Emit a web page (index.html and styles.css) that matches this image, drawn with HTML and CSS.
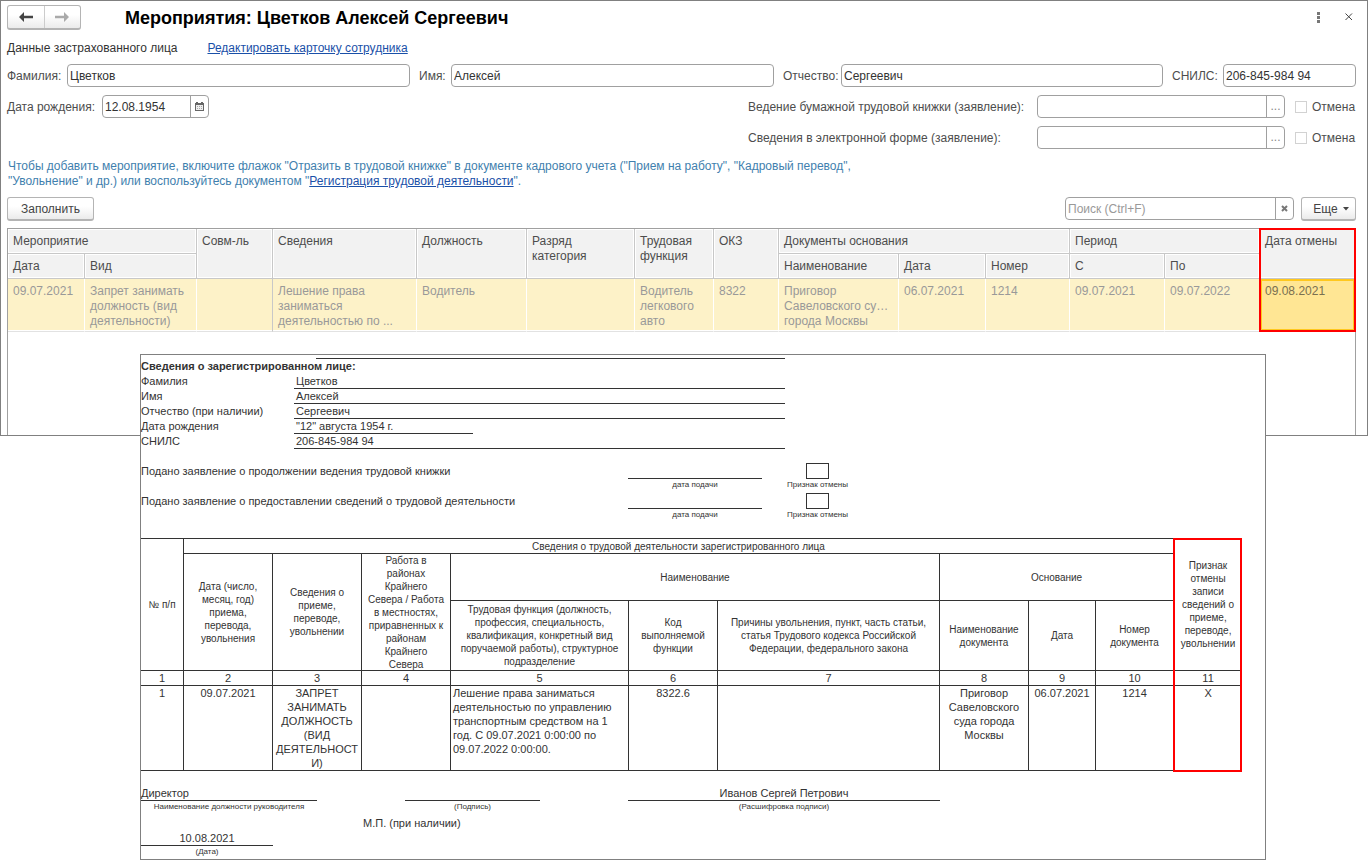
FILE: index.html
```html
<!DOCTYPE html>
<html lang="ru">
<head>
<meta charset="utf-8">
<title>Мероприятия: Цветков Алексей Сергеевич</title>
<link rel="stylesheet" href="styles.css">
</head>
<body>
<main class="window">
  <header class="titlebar">
    <div class="nav">
      <button class="nav-btn" type="button" aria-label="Назад"><svg class="nav-icon" viewBox="0 0 16 12"><path d="M1 6 L6 1 V4.8 H15 V7.2 H6 V11 Z"/></svg></button>
      <button class="nav-btn nav-btn-off" type="button" aria-label="Вперед"><svg class="nav-icon" viewBox="0 0 16 12"><path d="M15 6 L10 1 V4.8 H1 V7.2 H10 V11 Z"/></svg></button>
    </div>
    <h1 class="title">Мероприятия: Цветков Алексей Сергеевич</h1>
    <button class="tool" type="button" aria-label="Меню"><svg class="tool-icon" viewBox="0 0 12 12"><path class="dots" d="M4 0h3v3H4zM4 4h3v3H4zM4 8h3v3H4z"/></svg></button>
    <button class="tool" type="button" aria-label="Закрыть"><svg class="tool-icon" viewBox="0 0 12 12"><path class="cross" d="M2.5 1.5 L9 8 M9 1.5 L2.5 8"/></svg></button>
  </header>

  <div class="intro">
    <span>Данные застрахованного лица</span>
    <a class="link" href="#card">Редактировать карточку сотрудника</a>
  </div>

  <div class="person">
    <label class="label" for="surname">Фамилия:</label><input class="field" id="surname" value="Цветков">
    <label class="label label-next" for="name">Имя:</label><input class="field" id="name" value="Алексей">
    <label class="label label-next" for="patronymic">Отчество:</label><input class="field" id="patronymic" value="Сергеевич">
    <label class="label label-next" for="snils">СНИЛС:</label><input class="field" id="snils" value="206-845-984 94">
  </div>

  <div class="details">
    <div class="birth">
      <label class="label" for="birth">Дата рождения:</label>
      <div class="combo combo-date">
        <input class="combo-input" id="birth" value="12.08.1954">
        <button class="combo-btn" type="button" aria-label="Календарь"><svg class="cal" viewBox="0 0 9 9"><path d="M0 1h1V0h2v1h3V0h2v1h1v8H0z" fill="#666"/><path d="M1 3h7v5H1z" fill="#eee"/><path d="M2 4h1v1H2zM4 4h1v1H4zM6 4h1v1H6zM2 6h1v1H2zM4 6h1v1H4zM6 6h1v1H6z" fill="#aaa"/></svg></button>
      </div>
    </div>
    <div class="claims">
      <label class="label" for="paper">Ведение бумажной трудовой книжки (заявление):</label>
      <div class="combo"><input class="combo-input" id="paper"><button class="combo-btn" type="button">...</button></div>
      <label class="check"><input class="check-box" type="checkbox">Отмена</label>
      <label class="label" for="digital">Сведения в электронной форме (заявление):</label>
      <div class="combo"><input class="combo-input" id="digital"><button class="combo-btn" type="button">...</button></div>
      <label class="check"><input class="check-box" type="checkbox">Отмена</label>
    </div>
  </div>

  <p class="hint">Чтобы добавить мероприятие, включите флажок "Отразить в трудовой книжке" в документе кадрового учета ("Прием на работу", "Кадровый перевод",<br>"Увольнение" и др.) или воспользуйтесь документом "<a class="link" href="#reg">Регистрация трудовой деятельности</a>".</p>

  <div class="commands">
    <button class="btn btn-fill" type="button">Заполнить</button>
    <div class="combo combo-search">
      <input class="combo-input" aria-label="Поиск" placeholder="Поиск (Ctrl+F)">
      <button class="combo-btn" type="button" aria-label="Очистить"><svg class="clear" viewBox="0 0 7 7"><path d="M1 1 L6 6 M6 1 L1 6"/></svg></button>
    </div>
    <button class="btn btn-more" type="button">Еще<svg class="caret" viewBox="0 0 6 4"><path d="M0 0h6L3 3.6z"/></svg></button>
  </div>

  <div class="list">
    <table class="events">
      <colgroup><col class="e77"><col class="e112"><col class="e76"><col class="e144"><col class="e110"><col class="e108"><col class="e79"><col class="e65"><col class="e120"><col class="e87"><col class="e84"><col class="e95"><col class="e95"><col class="e95"></colgroup>
      <thead>
        <tr><th colspan="2">Мероприятие</th><th rowspan="2">Совм-ль</th><th rowspan="2">Сведения</th><th rowspan="2">Должность</th><th rowspan="2">Разряд<br>категория</th><th rowspan="2">Трудовая<br>функция</th><th rowspan="2">ОКЗ</th><th colspan="3">Документы основания</th><th colspan="2">Период</th><th rowspan="2" class="mark-top">Дата отмены</th></tr>
        <tr><th>Дата</th><th>Вид</th><th>Наименование</th><th>Дата</th><th>Номер</th><th>С</th><th>По</th></tr>
      </thead>
      <tbody>
        <tr><td>09.07.2021</td><td>Запрет занимать<br>должность (вид<br>деятельности)</td><td class="fixed-edge"></td><td>Лешение права<br>заниматься<br>деятельностью по ...</td><td>Водитель</td><td></td><td>Водитель<br>легкового<br>авто</td><td>8322</td><td>Приговор<br>Савеловского су…<br>города Москвы</td><td>06.07.2021</td><td>1214</td><td>09.07.2021</td><td>09.07.2022</td><td class="current">09.08.2021</td></tr>
      </tbody>
    </table>
  </div>
</main>

<article class="sheet">
  <div class="top-rule"></div>
  <h2 class="sheet-title">Сведения о зарегистрированном лице:</h2>
  <dl class="facts">
    <dt>Фамилия</dt><dd>Цветков</dd>
    <dt>Имя</dt><dd>Алексей</dd>
    <dt>Отчество (при наличии)</dt><dd>Сергеевич</dd>
    <dt>Дата рождения</dt><dd class="short">"12" августа 1954 г.</dd>
    <dt>СНИЛС</dt><dd>206-845-984 94</dd>
  </dl>

  <div class="request">
    <span>Подано заявление о продолжении ведения трудовой книжки</span>
    <span class="blank"></span><span class="square"></span>
    <small class="note note-date">дата подачи</small><small class="note note-mark">Признак отмены</small>
  </div>
  <div class="request">
    <span>Подано заявление о предоставлении сведений о трудовой деятельности</span>
    <span class="blank"></span><span class="square"></span>
    <small class="note note-date">дата подачи</small><small class="note note-mark">Признак отмены</small>
  </div>

  <table class="record">
    <colgroup><col class="r43"><col class="r89"><col class="r89"><col class="r89"><col class="r178"><col class="r89"><col class="r222"><col class="r89"><col class="r67"><col class="r78"><col class="r68"></colgroup>
    <thead>
      <tr class="h-title"><th rowspan="3">№ п/п</th><th colspan="9">Сведения о трудовой деятельности зарегистрированного лица</th><th rowspan="3" class="flag flag-top">Признак<br>отмены<br>записи<br>сведений о<br>приеме,<br>переводе,<br>увольнении</th></tr>
      <tr class="h-group"><th rowspan="2">Дата (число,<br>месяц, год)<br>приема,<br>перевода,<br>увольнения</th><th rowspan="2">Сведения о<br>приеме,<br>переводе,<br>увольнении</th><th rowspan="2"><div class="tight">Работа в<br>районах<br>Крайнего<br>Севера / Работа<br>в местностях,<br>приравненных к<br>районам<br>Крайнего<br>Севера</div></th><th colspan="3">Наименование</th><th colspan="3">Основание</th></tr>
      <tr class="h-cols"><th>Трудовая функция (должность,<br>профессия, специальность,<br>квалификация, конкретный вид<br>поручаемой работы), структурное<br>подразделение</th><th>Код<br>выполняемой<br>функции</th><th>Причины увольнения, пункт, часть статьи,<br>статья Трудового кодекса Российской<br>Федерации, федерального закона</th><th>Наименование<br>документа</th><th>Дата</th><th>Номер<br>документа</th></tr>
    </thead>
    <tbody>
      <tr class="nums"><td>1</td><td>2</td><td>3</td><td>4</td><td>5</td><td>6</td><td>7</td><td>8</td><td>9</td><td>10</td><td class="flag">11</td></tr>
      <tr class="entry"><td>1</td><td>09.07.2021</td><td>ЗАПРЕТ<br>ЗАНИМАТЬ<br>ДОЛЖНОСТЬ<br>(ВИД<br>ДЕЯТЕЛЬНОСТ<br>И)</td><td></td><td class="left">Лешение права заниматься<br>деятельностью по управлению<br>транспортным средством на 1<br>год. С 09.07.2021 0:00:00 по<br>09.07.2022 0:00:00.</td><td>8322.6</td><td></td><td>Приговор<br>Савеловского<br>суда города<br>Москвы</td><td>06.07.2021</td><td>1214</td><td class="flag flag-end">X</td></tr>
    </tbody>
  </table>

  <div class="sign">
    <div><div class="line line-left">Директор</div><small class="note">Наименование должности руководителя</small></div>
    <div><div class="line"></div><small class="note">(Подпись)</small></div>
    <div><div class="line">Иванов Сергей Петрович</div><small class="note">(Расшифровка подписи)</small></div>
  </div>
  <div class="stamp">М.П. (при наличии)</div>
  <div class="date"><div class="line">10.08.2021</div><small class="note">(Дата)</small></div>
</article>
</body>
</html>
```

FILE: styles.css
```css
* { box-sizing: border-box; }

body {
  margin: 0;
  background: #fff;
  color: #333;
  font: 12px/15px "Liberation Sans", Arial, sans-serif;
}

button, input { font: inherit; color: inherit; margin: 0; }

.window {
  border: 1px solid #808080;
  padding: 4px 11px 0 6px;
}

/* Title bar */
.titlebar { display: flex; align-items: center; height: 25px; }
.nav {
  display: flex;
  width: 74px;
  height: 25px;
  border: 1px solid #b4b4b4;
  border-bottom: 2px solid #b4b4b4;
  border-radius: 3px;
  background: linear-gradient(#fff 40%, #ebebeb);
}
.nav-btn {
  flex: 1;
  display: flex;
  align-items: center;
  justify-content: center;
  padding: 0;
  border: 0;
  background: none;
  fill: #444;
}
.nav-btn-off { border-left: 1px solid #ccc; fill: #aaa; }
.nav-icon { width: 16px; height: 12px; }
.title {
  flex: 1;
  margin: 0 0 0 44px;
  color: #000;
  font-size: 18px;
  line-height: 22px;
  font-weight: bold;
}
.tool { padding: 0; border: 0; background: none; width: 12px; height: 12px; margin-left: 18px; }
.tool:last-child { margin-right: 1px; }
.tool-icon { display: block; width: 12px; height: 12px; }
.dots { fill: #777; }
.cross { stroke: #444; fill: none; }

/* Form rows */
.intro { display: flex; gap: 30px; margin-top: 11px; }
.link { color: #1a50a8; text-decoration: underline; }
.label { padding-top: 1px; color: #4d4d4d; white-space: nowrap; }
.label-next { padding-left: 9px; }
.person {
  display: grid;
  grid-template-columns: 60px 343fr 41px 323fr 67px 322fr 60px 133px;
  align-items: center;
  margin-top: 8px;
}
.field {
  width: 100%;
  height: 23px;
  padding: 0 2px;
  border: 1px solid #a0a0a0;
  border-radius: 4px;
  background: #fff;
}
.details { display: flex; justify-content: space-between; align-items: flex-start; margin-top: 8px; }
.birth { display: grid; grid-template-columns: 95px 107px; align-items: center; }
.claims { display: grid; grid-template-columns: 289px 248px 71px; row-gap: 8px; align-items: center; }
.combo {
  display: flex;
  height: 23px;
  border: 1px solid #a0a0a0;
  border-radius: 4px;
  background: #fff;
}
.combo-input { flex: 1; min-width: 0; padding: 1px 2px 0; border: 0; background: none; }
.combo-input::placeholder { color: #999; opacity: 1; }
.combo-btn {
  display: flex;
  align-items: center;
  justify-content: center;
  width: 18px;
  padding: 0;
  border: 0;
  border-left: 1px solid #a0a0a0;
  background: none;
  color: #888;
}
.cal { width: 9px; height: 9px; }
.clear { width: 7px; height: 7px; stroke: #777; stroke-width: 2; }
.check { display: flex; align-items: center; gap: 5px; padding: 1px 0 0 10px; color: #4d4d4d; }
.check-box {
  appearance: none;
  width: 12px;
  height: 12px;
  border: 1px solid #d2d2d2;
  background: #fff;
}
.hint { margin: 10px 0 0 1px; color: #3f7fae; }

/* Command bar */
.commands { display: flex; margin-top: 8px; height: 24px; }
.btn {
  height: 24px;
  padding: 1px 0 0;
  border: 1px solid #b4b4b4;
  border-bottom: 2px solid #b4b4b4;
  border-radius: 3px;
  background: linear-gradient(#fff 40%, #ebebeb);
  color: #444;
}
.btn-fill { width: 87px; }
.combo-search { width: 229px; margin-left: auto; }
.btn-more { display: flex; align-items: center; justify-content: center; gap: 5px; width: 55px; margin-left: 7px; padding-left: 5px; }
.caret { width: 6px; height: 4px; fill: #444; }

/* Events list */
.list {
  min-height: 207px;
  margin-top: 7px;
  border: 1px solid #a0a0a0;
  border-bottom: 0;
}
.events { width: 100%; table-layout: fixed; border-collapse: separate; border-spacing: 0; }
.events th, .events td { text-align: left; vertical-align: top; font-weight: normal; white-space: nowrap; }
.events th {
  height: 25px;
  padding: 5px 5px 4px;
  border-right: 1px solid #c8c8c8;
  border-bottom: 1px solid #c8c8c8;
  background: #f2f2f2;
  box-shadow: inset 0 0 0 1px #fff;
  color: #4d4d4d;
}
.events td {
  height: 53px;
  padding: 5px 4px 2px 5px;
  border-right: 1px solid #fff;
  border-bottom: 1px solid #e2e2e2;
  background: #fdf2c8;
  box-shadow: inset 0 -1px #fff;
  color: #999;
}
.events .fixed-edge { border-right-color: #c8c8c8; }
.events .mark-top, .events .current { position: relative; border-right: 0; }
.events .current { background: #ffe694; box-shadow: inset 0 0 0 2px #ffc81e; color: #7a7050; }
.mark-top::after, .current::after { content: ""; position: absolute; inset: -1px -1px; border: 2px solid #f00; }
.mark-top::after { border-bottom: 0; }
.current::after { inset: 0 -1px -1px; border-top: 0; }
.e65 { width: 65px; }
.e76 { width: 76px; }
.e77 { width: 77px; }
.e79 { width: 79px; }
.e84 { width: 84px; }
.e87 { width: 87px; }
.e95 { width: 95px; }
.e108 { width: 108px; }
.e110 { width: 110px; }
.e112 { width: 112px; }
.e120 { width: 120px; }
.e144 { width: 144px; }

/* Printed form laid over the window */
.sheet {
  position: relative;
  margin: -82px 102px 0 140px;
  padding: 3px 23px 2px 0;
  border: 1px solid #808080;
  background: #fff;
  font-size: 11px;
}
.top-rule { width: 469px; height: 1px; margin-left: 175px; background: #333; }
.sheet-title { margin: 0; font-size: 11px; line-height: 15px; font-weight: bold; }
.facts { display: grid; grid-template-columns: 153px 491px; grid-auto-rows: 15px; margin: 0 0 15px; line-height: 14px; }
.facts dd { margin: 0; padding-left: 2px; border-bottom: 1px solid #333; }
.facts .short { width: 179px; }
.request {
  display: grid;
  grid-template-columns: 487px 134px 44px 23px;
  grid-template-rows: 15px 15px;
  align-items: end;
}
.blank { align-self: stretch; border-bottom: 1px solid #333; }
.square { grid-column: 4; height: 16px; border: 1px solid #333; }
.note { display: block; font-size: 8px; line-height: 11px; text-align: center; white-space: nowrap; }
.note-date { grid-column: 2; align-self: start; }
.note-mark { grid-column: 4; align-self: start; justify-self: center; }

.record {
  width: 100%;
  margin-top: 14px;
  table-layout: fixed;
  border-collapse: separate;
  border-spacing: 0;
  border-top: 1px solid #333;
  text-align: center;
  line-height: 14px;
}
.record th, .record td { padding: 0; border-right: 1px solid #333; border-bottom: 1px solid #333; white-space: nowrap; }
.record th { font-size: 10px; line-height: 13px; font-weight: normal; }
.tight { height: 116px; }
.h-title { height: 15px; }
.h-group { height: 47px; }
.h-cols { height: 70px; }
.nums { height: 15px; }
.entry { height: 85px; vertical-align: top; }
.record .left { padding-left: 2px; text-align: left; }
.record .flag { position: relative; border-right: 0; }
.flag::after { content: ""; position: absolute; inset: 0 0 -1px -1px; border: solid #f00; border-width: 0 2px; }
.flag-top::after { inset: -1px 0 -1px -1px; border-top-width: 2px; }
.flag-end::after { inset: 0 0 -2px -1px; border-bottom-width: 2px; }
.r43 { width: 43px; }
.r67 { width: 67px; }
.r68 { width: 68px; }
.r78 { width: 78px; }
.r89 { width: 89px; }
.r178 { width: 178px; }
.r222 { width: 222px; }

.sign { display: grid; grid-template-columns: 176px 135px 312px; column-gap: 88px; margin-top: 15px; }
.line { height: 15px; border-bottom: 1px solid #333; line-height: 14px; text-align: center; }
.line-left { text-align: left; }
.stamp { margin: 4px 0 0 222px; }
.date { width: 132px; }
```
